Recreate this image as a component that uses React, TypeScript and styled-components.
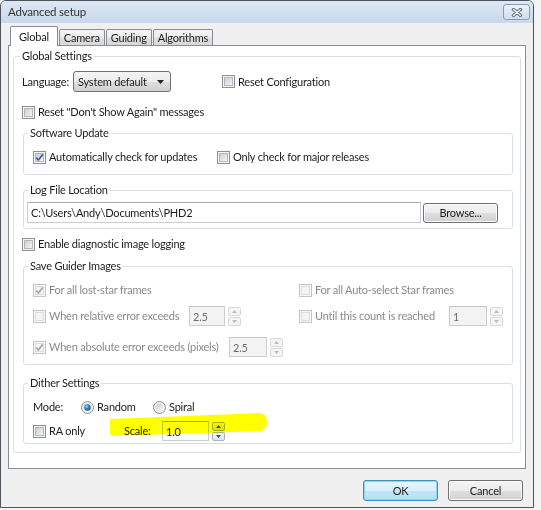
import React from "react";
import styled, { createGlobalStyle } from "styled-components";

const GlobalStyle = createGlobalStyle`
  html, body { margin: 0; padding: 0; }
  body {
    background: #f3f3f3;
    font-family: "Lato", "Liberation Sans", sans-serif;
    font-size: 11px;
    letter-spacing: -0.2px;
    color: #1c1c1c;
  }
  * { box-sizing: border-box; }
`;

const Window = styled.div`
  width: 534px;
  height: 508px;
  border: 1px solid #4f545b;
  border-radius: 6px 6px 0 0;
  background: #f0f0f0;
  display: flex;
  flex-direction: column;
  overflow: hidden;
`;

const TitleBar = styled.div`
  height: 22px;
  flex: none;
  display: flex;
  align-items: flex-start;
  padding: 0 3px 0 7px;
  background: linear-gradient(#dde8f5, #c8d8eb);
`;

const Title = styled.span`
  font-size: 11.5px;
  line-height: 22px;
  color: #333;
`;

const CloseButton = styled.div`
  margin: 3px 0 0 auto;
  width: 27px;
  height: 16px;
  border: 1px solid #8c9bb0;
  border-radius: 3px;
  background: linear-gradient(#eaf0f8, #d2deed);
  display: flex;
  align-items: center;
  justify-content: center;
`;

const Body = styled.div`
  flex: 1;
  display: flex;
  flex-direction: column;
  padding: 3px 7px 0;
`;

const TabBar = styled.div`
  display: flex;
  align-items: flex-end;
  height: 19px;
  padding-left: 2px;
  position: relative;
  z-index: 1;
`;

const Tab = styled.div<{ $active?: boolean }>`
  height: ${(p) => (p.$active ? 20 : 16)}px;
  margin-bottom: ${(p) => (p.$active ? -1 : 0)}px;
  padding: 0 ${(p) => (p.$active ? 8 : 4)}px;
  border: 1px solid #898c95;
  border-bottom: none;
  border-radius: 2px 2px 0 0;
  background: ${(p) =>
    p.$active ? "#fff" : "linear-gradient(#f4f4f4, #ececec 45%, #dfdfdf 55%, #d8d8d8)"};
  display: flex;
  align-items: center;
  white-space: nowrap;
  & + & {
    margin-left: ${(p) => (p.$active ? 0 : 1)}px;
  }
`;

const Panel = styled.div`
  height: 424px;
  flex: none;
  border: 1px solid #898c95;
  background: #fff;
  padding: 3px 4px 0;
`;

const Group = styled.fieldset<{ $mt?: number }>`
  margin: ${(p) => p.$mt ?? 0}px 0 0;
  padding: 0;
  border: 1px solid #d5dfe5;
  border-radius: 3px;
  min-width: 0;
`;

const Legend = styled.legend<{ $ml?: number }>`
  margin-left: ${(p) => p.$ml ?? 4}px;
  padding: 0 2px;
  line-height: 14px;
  color: #1c1c1c;
`;

const GroupBody = styled.div<{ $pad: string }>`
  padding: ${(p) => p.$pad};
  display: flex;
  flex-direction: column;
`;

const Row = styled.div<{ $mt?: number; $h?: number }>`
  display: flex;
  align-items: center;
  height: ${(p) => p.$h ?? 14}px;
  margin-top: ${(p) => p.$mt ?? 0}px;
  position: relative;
`;

const GridRow = styled(Row)`
  display: grid;
  grid-template-columns: 266px auto;
  align-items: center;
`;

const Cell = styled.div`
  display: flex;
  align-items: center;
`;

const Label = styled.span<{ $w?: number }>`
  flex: none;
  width: ${(p) => (p.$w ? `${p.$w}px` : "auto")};
  white-space: nowrap;
  line-height: 14px;
`;

const CheckItem = styled.label<{ $w?: number; $disabled?: boolean; $ml?: number }>`
  display: inline-flex;
  align-items: center;
  gap: 3px;
  flex: none;
  width: ${(p) => (p.$w ? `${p.$w}px` : "auto")};
  margin-left: ${(p) => p.$ml ?? 0}px;
  color: ${(p) => (p.$disabled ? "#8a8a8a" : "#1c1c1c")};
  white-space: nowrap;
  line-height: 14px;
  svg {
    flex: none;
  }
`;

const Select = styled.div`
  width: 98px;
  height: 21px;
  border: 1px solid #707070;
  border-radius: 3px;
  background: linear-gradient(#f4f4f4, #ececec 50%, #dedede 50%, #d2d2d2);
  display: flex;
  align-items: center;
  justify-content: space-between;
  padding: 0 6px 0 4px;
  white-space: nowrap;
`;

const TextField = styled.div<{ $w: number; $h?: number; $disabled?: boolean }>`
  width: ${(p) => p.$w}px;
  height: ${(p) => p.$h ?? 20}px;
  flex: none;
  border: 1px solid ${(p) => (p.$disabled ? "#cdcdcd" : "#c9ccd1")};
  border-top-color: ${(p) => (p.$disabled ? "#c4c4c4" : "#a9abb1")};
  background: ${(p) => (p.$disabled ? "#f3f3f3" : "#fff")};
  color: ${(p) => (p.$disabled ? "#6f6f6f" : "#1c1c1c")};
  padding-left: 3px;
  display: flex;
  align-items: center;
  white-space: nowrap;
`;

const Spin = styled.div`
  display: flex;
  flex-direction: column;
  gap: 1px;
  margin-left: 3px;
  width: 13px;
  flex: none;
`;

const SpinBtn = styled.div<{ $disabled?: boolean }>`
  height: 9px;
  border: 1px solid ${(p) => (p.$disabled ? "#d8d8d8" : "#a3b2c6")};
  border-radius: 2px;
  background: ${(p) => (p.$disabled ? "#f5f5f5" : "linear-gradient(#f3f7fc, #d8e4f2)")};
  display: flex;
  align-items: center;
  justify-content: center;
`;

const ButtonRow = styled.div`
  display: flex;
  justify-content: flex-end;
  gap: 10px;
  margin-top: 11px;
  padding-right: 3px;
`;

const Button = styled.button<{ $default?: boolean; $w?: number; $h?: number }>`
  width: ${(p) => p.$w ?? 75}px;
  height: ${(p) => p.$h ?? 21}px;
  flex: none;
  padding: 0;
  font: inherit;
  letter-spacing: inherit;
  color: #1c1c1c;
  border-radius: 3px;
  border: 1px solid ${(p) => (p.$default ? "#3c8ec7" : "#707070")};
  background: ${(p) =>
    p.$default
      ? "linear-gradient(#e9f6fd, #d6effb 50%, #c3e6f8 50%, #b4dff5)"
      : "linear-gradient(#f4f4f4, #ececec 50%, #dedede 50%, #d2d2d2)"};
  box-shadow: ${(p) => (p.$default ? "inset 0 0 0 1px #8fd3f5" : "inset 0 0 0 1px #fbfbfb")};
`;

const Highlight = styled.svg`
  position: absolute;
  left: 77px;
  top: -8px;
  pointer-events: none;
  mix-blend-mode: multiply;
`;

const CheckBox = ({ checked, disabled }: { checked?: boolean; disabled?: boolean }) => (
  <svg width="13" height="13" viewBox="0 0 13 13">
    <defs>
      <linearGradient id="cbfill" x1="0" y1="0" x2="1" y2="1">
        <stop offset="0" stopColor="#c7ccd2" />
        <stop offset="1" stopColor="#f7f7f7" />
      </linearGradient>
    </defs>
    <rect x="0.5" y="0.5" width="12" height="12" fill="#f6f6f6" stroke={disabled ? "#c5c5c5" : "#8e8f8f"} />
    <rect
      x="2.5"
      y="2.5"
      width="8"
      height="8"
      fill={disabled ? "#f4f4f4" : "url(#cbfill)"}
      stroke={disabled ? "#dedede" : "#b4b8be"}
    />
    {checked && (
      <path
        d="M3.2 6.6 L5.4 9 L9.8 3.4"
        fill="none"
        stroke={disabled ? "#a9a9a9" : "#4a5f97"}
        strokeWidth="1.7"
      />
    )}
  </svg>
);

const Radio = ({ checked }: { checked?: boolean }) => (
  <svg width="13" height="13" viewBox="0 0 13 13">
    <defs>
      <linearGradient id="rbfill" x1="0" y1="0" x2="1" y2="1">
        <stop offset="0" stopColor="#c9ced4" />
        <stop offset="1" stopColor="#f8f8f8" />
      </linearGradient>
      <radialGradient id="rdot" cx="0.4" cy="0.35" r="0.7">
        <stop offset="0" stopColor="#aee2ff" />
        <stop offset="0.45" stopColor="#2e86c9" />
        <stop offset="1" stopColor="#1b4f86" />
      </radialGradient>
    </defs>
    <circle cx="6.5" cy="6.5" r="6" fill="#f4f4f4" stroke="#8e8f8f" />
    <circle cx="6.5" cy="6.5" r="4.3" fill="url(#rbfill)" />
    {checked && <circle cx="6.5" cy="6.5" r="3.2" fill="url(#rdot)" />}
  </svg>
);

const Arrow = ({ up, disabled }: { up?: boolean; disabled?: boolean }) => (
  <svg width="5" height="3" viewBox="0 0 5 3">
    <polygon points={up ? "0,3 5,3 2.5,0" : "0,0 5,0 2.5,3"} fill={disabled ? "#bdbdbd" : "#3d4f72"} />
  </svg>
);

const SpinControl = ({ disabled }: { disabled?: boolean }) => (
  <Spin>
    <SpinBtn $disabled={disabled}>
      <Arrow up disabled={disabled} />
    </SpinBtn>
    <SpinBtn $disabled={disabled}>
      <Arrow disabled={disabled} />
    </SpinBtn>
  </Spin>
);

export default function App() {
  return (
    <>
      <GlobalStyle />
      <Window>
        <TitleBar>
          <Title>Advanced setup</Title>
          <CloseButton>
            <svg width="12" height="9" viewBox="0 0 12 9">
              <path d="M2.5 1.5 L9.5 7.5 M9.5 1.5 L2.5 7.5" stroke="#667386" strokeWidth="3.4" strokeLinecap="round" />
              <path d="M2.5 1.5 L9.5 7.5 M9.5 1.5 L2.5 7.5" stroke="#fbfcfd" strokeWidth="1.3" strokeLinecap="round" />
            </svg>
          </CloseButton>
        </TitleBar>
        <Body>
          <TabBar>
            <Tab $active>Global</Tab>
            <Tab>Camera</Tab>
            <Tab>Guiding</Tab>
            <Tab>Algorithms</Tab>
          </TabBar>
          <Panel>
            <Group>
              <Legend $ml={6}>Global Settings</Legend>
              <GroupBody $pad="0 7px 8px 8px">
                <Row $mt={8} $h={21}>
                  <Label $w={51}>Language:</Label>
                  <Select>
                    System default
                    <svg width="7" height="4" viewBox="0 0 7 4">
                      <polygon points="0,0 7,0 3.5,4" fill="#222" />
                    </svg>
                  </Select>
                  <CheckItem $ml={51}>
                    <CheckBox />
                    Reset Configuration
                  </CheckItem>
                </Row>
                <Row $mt={13}>
                  <CheckItem>
                    <CheckBox />
                    Reset "Don't Show Again" messages
                  </CheckItem>
                </Row>

                <Group $mt={7} style={{ marginLeft: 1 }}>
                  <Legend>Software Update</Legend>
                  <GroupBody $pad="10px 0 10px 9px">
                    <Row>
                      <CheckItem $w={184}>
                        <CheckBox checked />
                        Automatically check for updates
                      </CheckItem>
                      <CheckItem>
                        <CheckBox />
                        Only check for major releases
                      </CheckItem>
                    </Row>
                  </GroupBody>
                </Group>

                <Group $mt={8} style={{ marginLeft: 1 }}>
                  <Legend>Log File Location</Legend>
                  <GroupBody $pad="5px 0 5px 3px">
                    <Row $h={21}>
                      <TextField $w={394} $h={21}>C:\Users\Andy\Documents\PHD2</TextField>
                      <Button $h={20} style={{ marginLeft: 2 }}>Browse...</Button>
                    </Row>
                  </GroupBody>
                </Group>

                <Row $mt={8}>
                  <CheckItem>
                    <CheckBox />
                    Enable diagnostic image logging
                  </CheckItem>
                </Row>

                <Group $mt={8} style={{ marginLeft: 1 }}>
                  <Legend>Save Guider Images</Legend>
                  <GroupBody $pad="10px 0 7px 9px">
                    <GridRow>
                      <Cell>
                        <CheckItem $disabled>
                          <CheckBox checked disabled />
                          For all lost-star frames
                        </CheckItem>
                      </Cell>
                      <Cell>
                        <CheckItem $disabled>
                          <CheckBox disabled />
                          For all Auto-select Star frames
                        </CheckItem>
                      </Cell>
                    </GridRow>
                    <GridRow $mt={9} $h={20}>
                      <Cell>
                        <CheckItem $disabled $w={156}>
                          <CheckBox disabled />
                          When relative error exceeds
                        </CheckItem>
                        <TextField $w={36} $disabled>2.5</TextField>
                        <SpinControl disabled />
                      </Cell>
                      <Cell>
                        <CheckItem $disabled $w={150}>
                          <CheckBox disabled />
                          Until this count is reached
                        </CheckItem>
                        <TextField $w={38} $disabled>1</TextField>
                        <SpinControl disabled />
                      </Cell>
                    </GridRow>
                    <GridRow $mt={11} $h={20}>
                      <Cell>
                        <CheckItem $disabled $w={196}>
                          <CheckBox checked disabled />
                          When absolute error exceeds (pixels)
                        </CheckItem>
                        <TextField $w={38} $disabled>2.5</TextField>
                        <SpinControl disabled />
                      </Cell>
                    </GridRow>
                  </GroupBody>
                </Group>

                <Group $mt={11} style={{ marginLeft: 1 }}>
                  <Legend>Dither Settings</Legend>
                  <GroupBody $pad="10px 0 2px 9px">
                    <Row>
                      <Label $w={48}>Mode:</Label>
                      <CheckItem $w={72}>
                        <Radio checked />
                        Random
                      </CheckItem>
                      <CheckItem>
                        <Radio />
                        Spiral
                      </CheckItem>
                    </Row>
                    <Row $mt={7} $h={20}>
                      <CheckItem $w={91}>
                        <CheckBox />
                        RA only
                      </CheckItem>
                      <Label $w={38}>Scale:</Label>
                      <TextField $w={47}>1.0</TextField>
                      <SpinControl />
                      <Highlight width="160" height="26" viewBox="0 0 160 26">
                        <path
                          d="M0 6 L150 0 Q157 1 157 9 Q157 17 150 18 L4 23 Q0 23 0 19 Z"
                          fill="#ffff00"
                        />
                      </Highlight>
                    </Row>
                  </GroupBody>
                </Group>
              </GroupBody>
            </Group>
          </Panel>
          <ButtonRow>
            <Button $default>OK</Button>
            <Button>Cancel</Button>
          </ButtonRow>
        </Body>
      </Window>
    </>
  );
}
